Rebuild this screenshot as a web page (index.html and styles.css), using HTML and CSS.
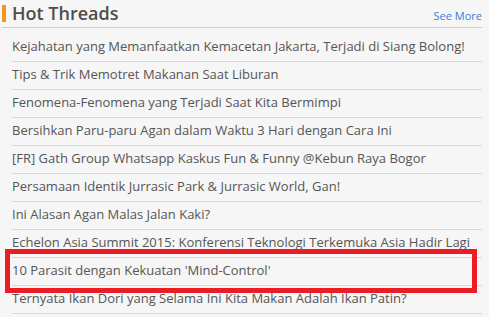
FILE: index.html
```html
<!DOCTYPE html>
<html>
<head>
<meta charset="utf-8">
<link rel="stylesheet" href="styles.css">
</head>
<body>
<div class="panel">
  <div class="head">
    <span class="bar"></span>
    <h2 class="title">Hot Threads</h2>
    <a class="more" href="#">See More</a>
  </div>
  <ul class="list">
    <li class="item"><a href="#">Kejahatan yang Memanfaatkan Kemacetan Jakarta, Terjadi di Siang Bolong!</a></li>
    <li class="item"><a href="#">Tips &amp; Trik Memotret Makanan Saat Liburan</a></li>
    <li class="item"><a href="#">Fenomena-Fenomena yang Terjadi Saat Kita Bermimpi</a></li>
    <li class="item"><a href="#">Bersihkan Paru-paru Agan dalam Waktu 3 Hari dengan Cara Ini</a></li>
    <li class="item"><a href="#">[FR] Gath Group Whatsapp Kaskus Fun &amp; Funny @Kebun Raya Bogor</a></li>
    <li class="item"><a href="#">Persamaan Identik Jurrasic Park &amp; Jurrasic World, Gan!</a></li>
    <li class="item"><a href="#">Ini Alasan Agan Malas Jalan Kaki?</a></li>
    <li class="item"><a href="#">Echelon Asia Summit 2015: Konferensi Teknologi Terkemuka Asia Hadir Lagi</a></li>
    <li class="item marked"><a href="#">10 Parasit dengan Kekuatan 'Mind-Control'</a><span class="mark"></span></li>
    <li class="item"><a href="#">Ternyata Ikan Dori yang Selama Ini Kita Makan Adalah Ikan Patin?</a></li>
  </ul>
</div>
</body>
</html>
```
FILE: styles.css
```css
html, body {
  margin: 0;
  padding: 0;
  background: #f6f6f6;
}
body {
  font-family: "Open Sans", "Liberation Sans", sans-serif;
  color: #555;
}
.panel {
  width: 480px;
  margin-left: 2px;
}
.head {
  display: flex;
  align-items: flex-start;
  height: 27px;
  border-bottom: 1px solid #d0d0d0;
}
.bar {
  width: 4px;
  height: 17px;
  margin-top: 5px;
  background: #f7941d;
}
.title {
  margin: 1px 0 0 6px;
  font-size: 18px;
  font-weight: 600;
  line-height: 25px;
  color: #4d4d4d;
  flex: 1;
}
.more {
  font-size: 11px;
  line-height: 15px;
  margin-top: 8px;
  color: #3a7fd5;
  text-decoration: none;
}
.list {
  list-style: none;
  margin: 6px 0 0 10px;
  padding: 0;
}
.item {
  position: relative;
  height: 24px;
  padding-bottom: 3px;
  border-bottom: 1px solid #d8d8d8;
  font-size: 13px;
  line-height: 24px;
  white-space: nowrap;
}
.item a {
  color: #555;
  text-decoration: none;
}
.mark {
  position: absolute;
  left: -7px;
  top: -9px;
  width: 462px;
  height: 34px;
  border: 5px solid #ed1c24;
}
```
